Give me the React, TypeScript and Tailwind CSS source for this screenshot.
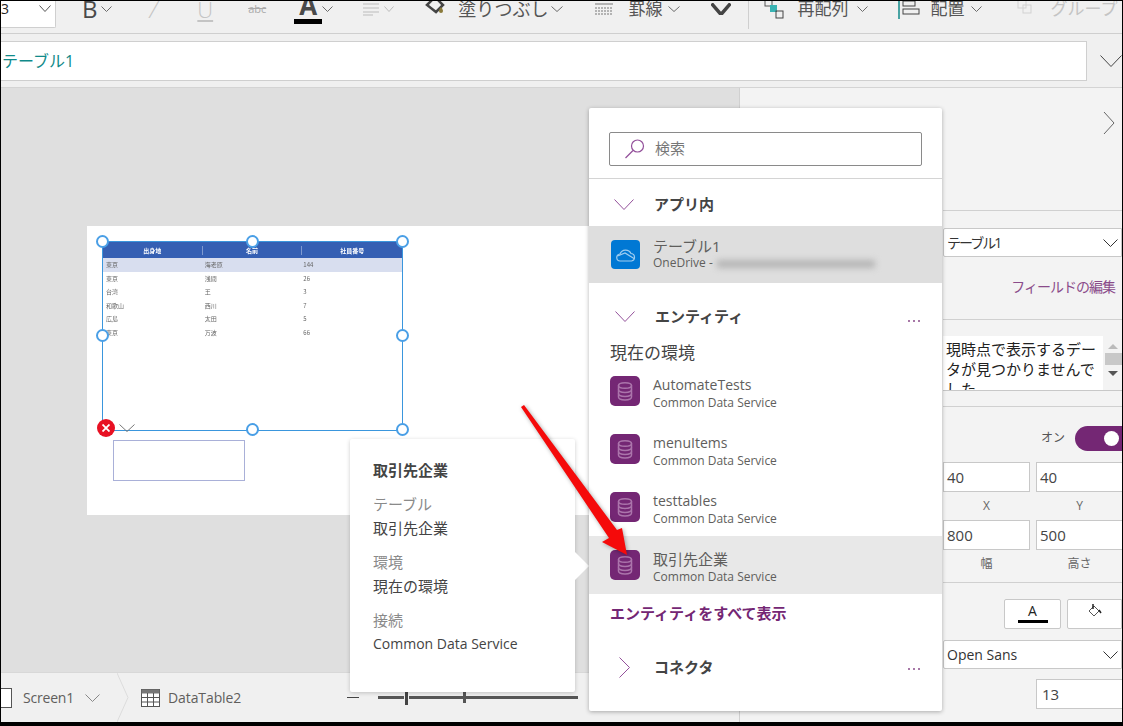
const FONT = "font-['Open_Sans','Noto_Sans_CJK_JP',sans-serif]";

const Chev = ({ w = 11, h = 6, color = "#6b6b6b", sw = 1, className = "" }: { w?: number; h?: number; color?: string; sw?: number; className?: string }) => (
  <svg width={w} height={h} viewBox={`0 0 ${w} ${h}`} className={`shrink-0 ${className}`}>
    <path d={`M0.5 0.5L${w / 2} ${h - 0.5}L${w - 0.5} 0.5`} fill="none" stroke={color} strokeWidth={sw} />
  </svg>
);

const Db = () => (
  <svg width="30" height="30" viewBox="0 0 30 30" className="shrink-0">
    <rect width="30" height="30" rx="5" fill="#742774" />
    <g fill="none" stroke="#ab75ab" strokeWidth="1.5">
      <ellipse cx="15" cy="9.5" rx="6.5" ry="2.8" />
      <path d="M8.5 9.5V21c0 1.6 2.9 2.9 6.5 2.9s6.5-1.3 6.5-2.9V9.5" />
      <path d="M8.5 13.5c0 1.6 2.9 2.9 6.5 2.9s6.5-1.3 6.500-2.9" />
      <path d="M8.5 17.5c0 1.6 2.9 2.9 6.5 2.9s6.5-1.3 6.500-2.9" />
    </g>
  </svg>
);

const Dots = () => (
  <div className="flex gap-[3px] mt-1">
    <span className="w-[2px] h-[2px] rounded-full bg-[#8a4b8a]" />
    <span className="w-[2px] h-[2px] rounded-full bg-[#8a4b8a]" />
    <span className="w-[2px] h-[2px] rounded-full bg-[#8a4b8a]" />
  </div>
);

const Entity = ({ name, active }: { name: string; active?: boolean }) => (
  <div className={`h-[58px] flex items-center pl-[21px] gap-[13px] ${active ? "bg-[#e8e8e8]" : ""}`}>
    <Db />
    <div className="leading-none pt-[3px]">
      <div className={`leading-[20px] text-[#605e5c] ${active ? "text-[15px]" : "text-[14px]"}`}>{name}</div>
      <div className="text-[12px] leading-[16px] text-[#605e5c]">Common Data Service</div>
    </div>
  </div>
);

const Handle = ({ className }: { className: string }) => (
  <span className={`absolute w-[13px] h-[13px] rounded-full bg-white border-2 border-[#4a9fe6] ${className}`} />
);

const rows = [
  ["東京", "海老原", "144"],
  ["東京", "浅間", "26"],
  ["台湾", "王", "3"],
  ["和歌山", "西川", "7"],
  ["広島", "太田", "5"],
  ["東京", "万波", "66"],
];

const Field = ({ value, label }: { value: string; label: string }) => (
  <div className="w-[87px] shrink-0">
    <div className="h-[30px] bg-white border border-[#c8c8c8] flex items-center pl-[3px] text-[15px] text-[#444]">{value}</div>
    <div className="h-[28px] flex items-center justify-center text-[12px] text-[#666]">{label}</div>
  </div>
);

const PanelSelect = ({ value, tight }: { value: string; tight?: boolean }) => (
  <div className="h-[29px] bg-white border border-[#c8c8c8] rounded-l-[2px] flex items-center justify-between pl-[3px] pr-[3px] text-[14px] text-[#333]">
    <span className={tight ? "tracking-[-2px]" : ""}>{value}</span>
    <Chev w={15} h={8} color="#333" />
  </div>
);

const Toolbar = () => (
  <div className="h-[33px] shrink-0 bg-[#f0f0f0] border-b border-[#cfcfcf] overflow-hidden flex items-start">
    <div className="w-[55px] h-[27px] bg-white border-r border-b border-[#cfcfcf] rounded-br-[2px] flex items-center justify-between overflow-hidden pr-1 text-[14px] text-[#222]">
      <span className="-ml-[8px] -mt-[12px]">13</span>
      <Chev w={12} h={7} color="#555" className="mb-3" />
    </div>
    <div className="h-[16px] flex items-center text-[#444]">
      <span className="ml-[26px] text-[24px] leading-none text-[#4a4a4a]">B</span>
      <Chev w={11} h={6} className="ml-[3px]" />
      <span className="ml-[38px] text-[24px] italic font-light leading-none text-[#c4c4c4]">/</span>
      <span className="ml-[40px] text-[22px] underline font-light leading-none text-[#c4c4c4]">U</span>
      <span className="ml-[35px] text-[11px] line-through text-[#aaa]">abc</span>
      <div className="ml-[28px] w-[28px] relative flex justify-center">
        <span className="text-[26px] font-bold leading-none text-[#4a4a4a] -mt-[9px]">A</span>
        <span className="absolute left-0 top-[18px] w-[28px] h-[5px] bg-black" />
      </div>
      <Chev w={11} h={6} />
      <svg width="16" height="14" viewBox="0 0 16 14" className="ml-[30px] shrink-0" stroke="#bbb" strokeWidth="1.2">
        <path d="M0 2h16M0 6h16M0 10h16M0 13h10" />
      </svg>
      <Chev w={10} h={6} color="#bbb" className="ml-[5px]" />
      <svg width="20" height="20" viewBox="0 0 20 20" className="ml-[31px] -mt-[6px] shrink-0">
        <path d="M2 9l8-8 8 8-7 7z" fill="none" stroke="#444" strokeWidth="2.500" />
        <path d="M16 11c1.500 2 2 3 2 4a2 2 0 01-4 0c0-1 .5-2 2-4z" fill="#8a7a3a" />
      </svg>
      <span className="ml-[13px] text-[18px] whitespace-nowrap text-[#555]">塗りつぶし</span>
      <Chev w={12} h={6} className="ml-[3px]" />
      <svg width="18" height="14" viewBox="0 0 18 14" className="ml-[32px] shrink-0" stroke="#777">
        <path d="M0 2h18" />
        <path d="M0 6h18M0 9h18M0 12h18" strokeDasharray="2 1" />
      </svg>
      <span className="ml-[15px] text-[17px] whitespace-nowrap text-[#555]">罫線</span>
      <Chev w={12} h={6} className="ml-[6px]" />
      <Chev w={20} h={12} color="#444" sw={3.500} className="ml-[31px]" />
      <span className="ml-[17px] w-px h-[40px] bg-[#cfcfcf]" />
      <svg width="20" height="20" viewBox="0 0 20 20" className="ml-[15px] shrink-0">
        <rect x="1" y="0" width="7" height="7" fill="none" stroke="#555" />
        <rect x="6" y="6" width="7" height="7" fill="#39b3b3" />
        <rect x="12" y="12" width="7" height="7" fill="none" stroke="#444" />
      </svg>
      <span className="ml-[13px] text-[17px] whitespace-nowrap text-[#555]">再配列</span>
      <Chev w={11} h={6} className="ml-[9px]" />
      <svg width="22" height="20" viewBox="0 0 22 20" className="ml-[30px] shrink-0">
        <path d="M1 0v20" stroke="#108a8a" strokeWidth="1.500" />
        <rect x="5" y="2" width="12" height="5" fill="none" stroke="#444" />
        <rect x="5" y="10" width="16" height="5" fill="none" stroke="#444" />
      </svg>
      <span className="ml-[10px] text-[17px] whitespace-nowrap text-[#555]">配置</span>
      <Chev w={11} h={6} className="ml-[7px]" />
      <svg width="20" height="20" viewBox="0 0 20 20" className="ml-[33px] shrink-0" fill="none" stroke="#d2d2d2">
        <rect x="3" y="1" width="8" height="8" />
        <rect x="8" y="6" width="8" height="8" />
      </svg>
      <span className="ml-[15px] text-[17px] whitespace-nowrap text-[#c4c4c4]">グループ</span>
    </div>
  </div>
);

const Canvas = () => (
  <div className="flex-1 bg-[#dfdfdf] pt-[138px] pl-[86px]">
    <div className="h-[289px] bg-white pt-[15px] pl-[15px]">
      <div className="relative w-[301px] h-[190px] border-[1.5px] border-[#3a96dd] text-[6px] text-[#666] font-['Noto_Sans_CJK_JP',sans-serif] blur-[0.3px]">
        <div className="h-[16px] bg-[#355fb3] text-white grid grid-cols-3 items-center text-center font-bold">
          <span className="border-r border-[#7f9ad0]">出身地</span>
          <span className="border-r border-[#7f9ad0]">名前</span>
          <span>社員番号</span>
        </div>
        {rows.map((r, i) => (
          <div key={i} className={`h-[13.5px] grid grid-cols-3 items-center pl-[3px] ${i === 0 ? "bg-[#d8deef]" : ""}`}>
            <span>{r[0]}</span>
            <span>{r[1]}</span>
            <span>{r[2]}</span>
          </div>
        ))}
      </div>
      <div className="ml-[11px] mt-[9px] w-[132px] h-[41px] border border-[#a9b0d8] bg-white" />
    </div>
  </div>
);

const StatusBar = () => (
  <div className="h-[50px] shrink-0 bg-[#f0f0f0] border-t border-[#d8d8d8] flex items-center text-[14px] text-[#605e5c]">
    <span className="w-[11px] h-[20px] bg-white border-r border-y border-[#555] shrink-0" />
    <span className="ml-[11px] tracking-[-0.2px]">Screen1</span>
    <Chev w={15} h={8} color="#888" className="ml-[11px]" />
    <svg width="12" height="49" viewBox="0 0 12 49" className="ml-[17px] shrink-0">
      <path d="M0 0L11 24.500L0 49" fill="none" stroke="#dcdcdc" />
    </svg>
    <svg width="19" height="18" viewBox="0 0 19 18" className="ml-[12px] shrink-0">
      <rect x="0.500" y="0.500" width="18" height="17" fill="#fff" stroke="#555" />
      <rect x="0.500" y="0.500" width="18" height="4" fill="#777" />
      <path d="M0 8.500h19M0 13h19M6.500 4v14M12.500 4v14" stroke="#555" />
    </svg>
    <span className="ml-[8px] tracking-[-0.1px]">DataTable2</span>
    <span className="ml-[106px] w-[12px] h-px bg-[#444]" />
    <div className="ml-[19px] w-[200px] h-[3px] bg-[#555] relative">
      <span className="absolute left-[26px] -top-[6px] w-[5px] h-[15px] bg-[#444] border-x border-[#f0f0f0]" />
      <span className="absolute left-[85px] -top-[4px] w-[3px] h-[11px] bg-[#555]" />
    </div>
  </div>
);

const RightPanel = () => (
  <div className="flex-1 bg-[#f3f3f3] border-l border-[#d0d0d0] pl-[203px] flex flex-col overflow-hidden">
    <div className="h-[123px] shrink-0 border-b border-[#d0d0d0] relative">
      <svg width="12" height="24" viewBox="0 0 12 24" className="absolute right-[7px] top-[23px]">
        <path d="M1 1l10 11L1 23" fill="none" stroke="#666" />
      </svg>
    </div>
    <div className="h-[109px] shrink-0 border-b border-[#d0d0d0] pt-[17px]">
      <PanelSelect value="テーブル1" tight />
      <div className="mt-[20px] pr-[7px] text-right text-[14px] tracking-[-1px] leading-[20px] text-[#8a4b8a]">フィールドの編集</div>
    </div>
    <div className="h-[87px] shrink-0 border-b border-[#d0d0d0] pt-[16px]">
      <div className="h-[55px] bg-white border-b border-[#c8c8c8] flex overflow-hidden">
        <div className="flex-1 pl-[3px] pt-[3px] text-[15px] leading-[20px] text-[#222]">現時点で表示するデータが見つかりませんでした。</div>
        <div className="w-[19px] shrink-0 bg-[#f3f3f3] flex flex-col items-center pt-[8px] text-[#999]">
          <span className="w-0 h-0 border-x-[5px] border-x-transparent border-b-[5px] border-b-[#bbb]" />
          <span className="w-full ml-[3px] h-[12px] mt-[4px] bg-[#c8c8c8]" />
          <span className="w-0 h-0 mt-[6px] border-x-[5px] border-x-transparent border-t-[5px] border-t-[#555]" />
        </div>
      </div>
    </div>
    <div className="h-[176px] shrink-0 border-b border-[#d0d0d0] pt-[18px]">
      <div className="h-[26px] flex items-center justify-end gap-[10px]">
        <span className="text-[12px] text-[#555]">オン</span>
        <div className="w-[47px] h-[25px] bg-[#742774] rounded-l-full relative">
          <span className="absolute left-[29px] top-[5px] w-[15px] h-[15px] rounded-full bg-white" />
        </div>
      </div>
      <div className="mt-[11px] flex gap-[6px]">
        <Field value="40" label="X" />
        <Field value="40" label="Y" />
      </div>
      <div className="flex gap-[6px]">
        <Field value="800" label="幅" />
        <Field value="500" label="高さ" />
      </div>
    </div>
    <div className="pt-[16px]">
      <div className="flex justify-end gap-[6px]">
        <div className="w-[57px] h-[30px] bg-white border border-[#c8c8c8] rounded-[2px] flex flex-col items-center text-[14px] leading-[18px] text-[#222]">
          <span className="mt-[2px]">A</span>
          <span className="w-[30px] h-[3px] bg-black" />
        </div>
        <div className="w-[55px] h-[30px] bg-white border border-[#c8c8c8] rounded-l-[2px] flex items-start justify-center pt-[3px]">
          <svg width="14" height="14" viewBox="0 0 14 14">
            <path d="M1 8l5-5 5 5-5 5z" fill="none" stroke="#555" />
            <path d="M5 1v5M11 7l2 3" stroke="#222" strokeWidth="1.500" />
          </svg>
        </div>
      </div>
      <div className="mt-[11px]"><PanelSelect value="Open Sans" /></div>
      <div className="mt-[10px] ml-[93px] w-[87px] h-[30px] bg-white border border-[#c8c8c8] flex items-center pl-[5px] text-[15px] text-[#444]">13</div>
    </div>
  </div>
);

const Flyout = () => (
  <div className="absolute left-[588px] top-[107px] w-[353px] h-[603px] bg-white shadow-[0_1px_4px_rgba(0,0,0,0.3)] rounded-[2px] z-20 flex flex-col">
    <div className="h-[71px] shrink-0 border-b border-[#d4d4d4] pt-[24px] px-[20px]">
      <div className="h-[34px] border border-[#8a8a8a] rounded-[2px] flex items-center pl-[15px] gap-[10px] text-[15px] text-[#777]">
        <svg width="20" height="20" viewBox="0 0 20 20" fill="none" stroke="#93509a" strokeWidth="1.200">
          <circle cx="12.500" cy="7" r="6" />
          <path d="M8 11.500L0.500 19" />
        </svg>
        <span className="-mt-[2px]">検索</span>
      </div>
    </div>
    <div className="h-[47px] shrink-0 flex items-center pl-[25px] pt-[4px]">
      <Chev w={20} h={11} color="#93509a" />
      <span className="ml-[20px] text-[15px] font-bold text-[#444]">アプリ内</span>
    </div>
    <div className="h-[57px] shrink-0 bg-[#dedede] flex items-center pl-[22px] gap-[13px]">
      <div className="w-[29px] h-[29px] rounded-[4px] bg-[#0078d4] flex items-center justify-center shrink-0">
        <svg width="20" height="14" viewBox="0 0 20 14" fill="none" stroke="#9fcdf0" strokeWidth="1.200">
          <path d="M4.500 13a3.500 3.500 0 01-.5-7A6 6 0 0115 5.500a3.800 3.800 0 01.5 7.500z" />
          <path d="M1.500 8L9 5l9 5.500" />
        </svg>
      </div>
      <div>
        <div className="text-[15px] leading-[18px] text-[#605e5c] -mt-[1px]">テーブル1</div>
        <div className="relative text-[12px] leading-[16px] text-[#605e5c] whitespace-nowrap">
          OneDrive -
          <span className="absolute left-[64px] top-[5px] w-[158px] h-[8px] bg-[#b5b5b5] blur-[3px]" />
        </div>
      </div>
    </div>
    <div className="h-[48px] shrink-0 flex items-end pb-[4px] pl-[26px] pr-[22px]">
      <Chev w={20} h={11} color="#93509a" className="mb-[5px]" />
      <span className="ml-[20px] text-[15px] font-bold text-[#444] flex-1">エンティティ</span>
      <div className="mb-[5px]"><Dots /></div>
    </div>
    <div className="h-[31px] shrink-0 pl-[21px] pt-[13px] text-[17px] leading-[18px] text-[#444]">現在の環境</div>
    <Entity name="AutomateTests" />
    <Entity name="menuItems" />
    <Entity name="testtables" />
    <Entity name="取引先企業" active />
    <div className="h-[38px] shrink-0 pl-[21px] flex items-center text-[15px] font-bold text-[#742774]">エンティティをすべて表示</div>
    <div className="h-[70px] shrink-0 flex items-center pl-[30px] pr-[22px]">
      <svg width="11" height="21" viewBox="0 0 11 21" className="shrink-0">
        <path d="M0.500 0.500L10.500 10.500L0.500 20.500" fill="none" stroke="#93509a" />
      </svg>
      <span className="ml-[24px] text-[15px] font-bold text-[#444] flex-1">コネクタ</span>
      <Dots />
    </div>
  </div>
);

const Tip = () => (
  <div className="absolute left-[349px] top-[438px] w-[225px] h-[253px] bg-white shadow-[0_1px_4px_rgba(0,0,0,0.2)] rounded-[2px] z-10 pl-[23px] pt-[19px] text-[15px] leading-[24px] text-[#444]">
    <span className="absolute left-[225px] top-[113px] w-0 h-0 border-y-[14px] border-y-transparent border-l-[14px] border-l-white" />
    <div className="font-bold h-[34px]">取引先企業</div>
    <div className="text-[#8a8a8a]">テーブル</div>
    <div className="h-[34px]">取引先企業</div>
    <div className="text-[#8a8a8a]">環境</div>
    <div className="h-[34px]">現在の環境</div>
    <div className="text-[#8a8a8a]">接続</div>
    <div className="text-[14px]">Common Data Service</div>
  </div>
);

export default function App() {
  return (
    <div className={`relative w-[1123px] h-[726px] overflow-hidden flex flex-col bg-[#f0f0f0] border-t border-l border-r border-b-4 border-black ${FONT}`}>
      <Toolbar />
      <div className="h-[54px] shrink-0 bg-[#f0f0f0] border-b border-[#d4d4d4] flex items-center">
        <div className="w-[1086px] h-[40px] bg-white border border-[#cfcfcf] border-l-0 flex items-center pl-[1px] text-[16px] text-[#108a8a]">テーブル1</div>
        <Chev w={22} h={12} color="#444" className="ml-[13px]" />
      </div>
      <div className="flex-1 flex min-h-0">
        <div className="w-[738px] shrink-0 flex flex-col">
          <Canvas />
          <StatusBar />
        </div>
        <RightPanel />
      </div>

      {/* selection handles on the canvas */}
      <Handle className="left-[95px] top-[234px]" />
      <Handle className="left-[245px] top-[234px]" />
      <Handle className="left-[395px] top-[234px]" />
      <Handle className="left-[95px] top-[328px]" />
      <Handle className="left-[395px] top-[328px]" />
      <Handle className="left-[245px] top-[422px]" />
      <Handle className="left-[395px] top-[422px]" />
      <span className="absolute left-[96px] top-[418px] w-[18px] h-[18px] rounded-full bg-[#e81123] text-white flex items-center justify-center">
        <svg width="8" height="8" viewBox="0 0 8 8" stroke="#fff" strokeWidth="1.800"><path d="M0.500 0.500l7 7M7.500 0.500l-7 7" /></svg>
      </span>
      <Chev w={16} h={8} color="#777" className="absolute left-[118px] top-[423px]" />

      <Tip />
      <Flyout />

      {/* annotation arrow */}
      <svg width="1123" height="726" viewBox="0 0 1123 726" className="absolute -left-px -top-px z-30 pointer-events-none drop-shadow-[1px_1px_2px_rgba(0,0,0,0.35)]">
        <polygon points="521,407 524,405 617,530 622,528 627,555 602,542 609,538" fill="#f50a0a" />
      </svg>
    </div>
  );
}
